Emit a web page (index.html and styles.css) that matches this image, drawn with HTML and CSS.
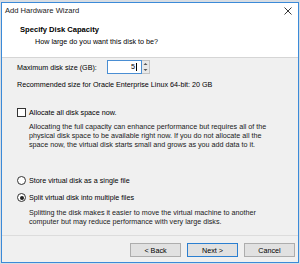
FILE: index.html
```html
<!DOCTYPE html>
<html lang="en">
<head>
    <meta charset="UTF-8">
    <title>Add Hardware Wizard</title>
    <link rel="stylesheet" href="styles.css">
</head>
<body>
    <div class="window">
        <div class="titlebar">
            <span class="title">Add Hardware Wizard</span>
            <svg class="close" width="8" height="8" viewBox="0 0 8 8">
                <path d="M0.5 0.5 L7.5 7.5 M7.5 0.5 L0.5 7.5" stroke="#222" stroke-width="0.9" fill="none"/>
            </svg>
        </div>

        <div class="header">
            <div class="heading">Specify Disk Capacity</div>
            <div class="subheading">How large do you want this disk to be?</div>
        </div>

        <div class="content">
            <div class="size-row">
                <span class="label">Maximum disk size (GB):</span>
                <div class="spin">
                    <div class="spin-input"><span class="caret">5</span></div>
                    <div class="spin-buttons">
                        <svg width="7" height="6" viewBox="0 0 7 6"><path d="M1.5 4 L3.5 2 L5.5 4 Z" fill="#555"/></svg>
                        <svg width="7" height="6" viewBox="0 0 7 6"><path d="M1.5 2 L3.5 4 L5.5 2 Z" fill="#555"/></svg>
                    </div>
                </div>
            </div>
            <div class="line recommended">Recommended size for Oracle Enterprise Linux 64-bit: 20 GB</div>

            <div class="option check-row">
                <span class="checkbox"></span>
                <span>Allocate all disk space now.</span>
            </div>
            <p class="note">
                Allocating the full capacity can enhance performance but requires all of the<br>
                physical disk space to be available right now. If you do not allocate all the<br>
                space now, the virtual disk starts small and grows as you add data to it.
            </p>

            <div class="option radio-first">
                <span class="radio"></span>
                <span>Store virtual disk as a single file</span>
            </div>
            <div class="option radio-second">
                <span class="radio checked"></span>
                <span>Split virtual disk into multiple files</span>
            </div>
            <p class="note note-split">
                Splitting the disk makes it easier to move the virtual machine to another<br>
                computer but may reduce performance with very large disks.
            </p>
        </div>

        <div class="footer">
            <button class="btn">&lt; Back</button>
            <button class="btn btn-default">Next &gt;</button>
            <button class="btn">Cancel</button>
        </div>
    </div>
</body>
</html>
```

FILE: styles.css
```css
* {
    margin: 0;
    padding: 0;
    box-sizing: border-box;
}

body {
    width: 300px;
    height: 264px;
    overflow: hidden;
    background: #d8dde3;
    font-family: 'Liberation Sans', Arial, sans-serif;
    font-size: 7.2px;
    color: #000;
}

.window {
    margin: 2px 0 0 1px;
    width: 298px;
    height: 261px;
    border: 1px solid #3b8ad8;
    background: #f0f0f0;
    display: flex;
    flex-direction: column;
}

.titlebar {
    height: 15px;
    background: #fff;
    display: flex;
    align-items: center;
    justify-content: space-between;
    padding: 0 6px 0 3px;
}

.title {
    font-size: 7.6px;
    color: #222;
}

.header {
    height: 40px;
    background: #fff;
    border-bottom: 1px solid #d5d5d5;
    padding: 7px 0 0 18px;
}

.heading {
    font-weight: bold;
    font-size: 7.6px;
    line-height: 9px;
}

.subheading {
    margin: 3px 0 0 15px;
    line-height: 9px;
}

.content {
    height: 177px;
    padding: 2px 0 0 15px;
}

.size-row {
    display: flex;
    align-items: center;
    height: 14px;
}

.label {
    width: 90px;
}

.spin {
    display: flex;
    height: 14px;
}

.spin-input {
    width: 35px;
    border: 1px solid #4a8ed3;
    background: #fff;
    display: flex;
    align-items: center;
    justify-content: flex-end;
    padding-right: 4px;
}

.caret {
    border-right: 1px solid #000;
    padding-right: 1px;
    line-height: 8px;
}

.spin-buttons {
    width: 8px;
    display: flex;
    flex-direction: column;
    border: 1px solid #c4c4c4;
    border-left: none;
    background: #e9e9e9;
}

.spin-buttons svg {
    display: block;
    height: 6px;
}

.line {
    line-height: 9px;
}

.recommended {
    margin-top: 6px;
}

.option {
    display: flex;
    align-items: center;
    gap: 3px;
    height: 9px;
}

.check-row {
    margin-top: 19px;
}

.checkbox {
    width: 9px;
    height: 9px;
    border: 1px solid #333;
    background: #fff;
}

.radio {
    width: 9px;
    height: 9px;
    border: 1px solid #333;
    border-radius: 50%;
    background: #fff;
    display: flex;
    align-items: center;
    justify-content: center;
}

.radio.checked::after {
    content: '';
    width: 4px;
    height: 4px;
    border-radius: 50%;
    background: #222;
}

.note {
    margin: 5px 0 0 12px;
    line-height: 9px;
    color: #1a1a1a;
}

.radio-first {
    margin-top: 27px;
}

.radio-second {
    margin-top: 8px;
}

.note-split {
    margin-top: 6px;
}

.footer {
    flex: 1;
    border-top: 1px solid #dcdcdc;
    display: flex;
    justify-content: flex-end;
    gap: 6px;
    padding: 7px 3px 0 0;
}

.btn {
    width: 51px;
    height: 14px;
    background: #e1e1e1;
    border: 1px solid #adadad;
    font-family: inherit;
    font-size: 7.2px;
    color: #000;
}

.btn-default {
    border-color: #2b7fd0;
}
```
